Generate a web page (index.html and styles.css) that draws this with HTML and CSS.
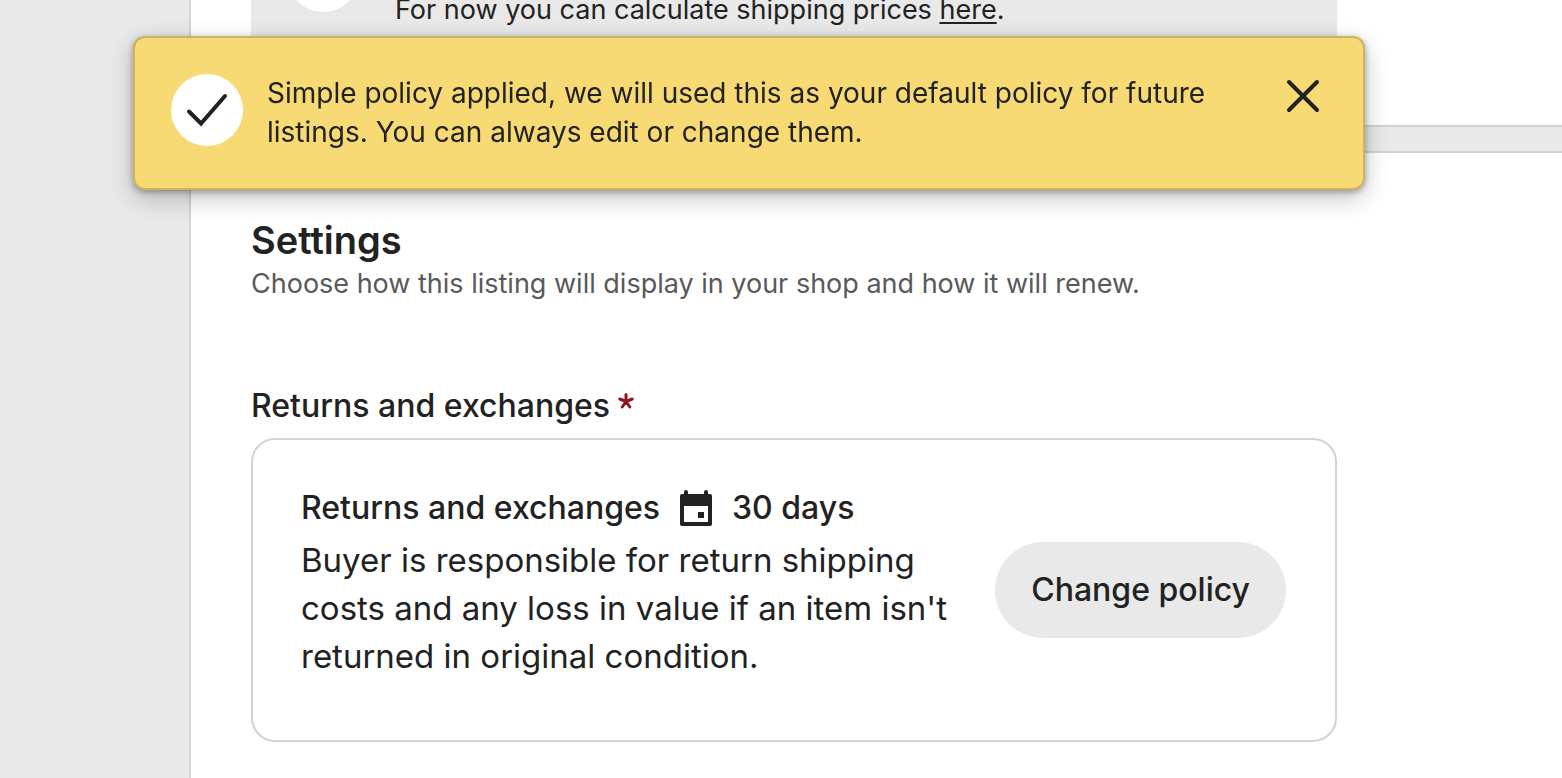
FILE: index.html
```
<!DOCTYPE html>
<html lang="en">
<head>
<meta charset="utf-8">
<meta name="viewport" content="width=device-width, initial-scale=1">
<title>Listing settings</title>
<link rel="stylesheet" href="styles.css">
</head>
<body>
<main class="page">
  <section class="panel panel-shipping">
    <div class="notice">
      <span class="notice-badge"></span>
      <p class="notice-text">For now you can calculate shipping prices <a class="link" href="#">here</a>.</p>
    </div>
  </section>
  <section class="panel panel-settings">
    <h1 class="title">Settings</h1>
    <p class="subtitle">Choose how this listing will display in your shop and how it will renew.</p>
    <h2 class="field-label">Returns and exchanges
      <svg class="required" viewBox="0 0 16 16" role="img" aria-label="required"><path d="M8 8.500V1.500M8 8.500L1.800 6M8 8.500l6.200-2.500M8 8.500l-3.800 5.500M8 8.500l3.800 5.500"/></svg>
    </h2>
    <div class="policy">
      <div class="policy-info">
        <h3 class="policy-title">
          <span>Returns and exchanges</span>
          <svg class="calendar" viewBox="0 0 32 36" aria-hidden="true"><path fill-rule="evenodd" d="M4 4V2a2 2 0 0 1 4 0v2h16V2a2 2 0 0 1 4 0v2h2a2 2 0 0 1 2 2v28a2 2 0 0 1-2 2H2a2 2 0 0 1-2-2V6a2 2 0 0 1 2-2zM4 16v16h24V16zM18 22h6v6h-6z"/></svg>
          <span>30 days</span>
        </h3>
        <p class="policy-text">Buyer is responsible for return shipping costs and any loss in value if an item isn't returned in original condition.</p>
      </div>
      <button class="change" type="button">Change policy</button>
    </div>
  </section>
</main>
<div class="toast" role="status">
  <span class="toast-badge">
    <svg class="check" viewBox="0 0 42 34" aria-hidden="true"><path d="M3 18.500L15 30.500L39 3"/></svg>
  </span>
  <p class="toast-text">Simple policy applied, we will used this as your default policy for future listings. You can always edit or change them.</p>
  <button class="close" type="button" aria-label="Close">
    <svg class="cross" viewBox="0 0 34 34" aria-hidden="true"><path d="M3 3L31 31M31 3L3 31"/></svg>
  </button>
</div>
</body>
</html>
```

FILE: styles.css
```
* {
  box-sizing: border-box;
}

body {
  margin: 0;
  height: 100vh;
  overflow: hidden;
  background: #e9e9e9;
  color: #222;
  font-family: Inter, "Liberation Sans", sans-serif;
}

h1, h2, h3, p {
  margin: 0;
  font-weight: 400;
}

button {
  border: 0;
  padding: 0;
  color: inherit;
  font-family: inherit;
  cursor: pointer;
}

.page {
  display: flex;
  flex-direction: column;
  gap: 24px;
  min-height: calc(100vh + 96px);
  margin-top: -96px;
  padding-left: 189px;
}

.panel {
  padding: 0 225px 60px 60px;
  background: #fff;
  border: 2px solid #d3d3d3;
  border-right: 0;
}

.panel-shipping {
  border-top: 0;
}

.panel-settings {
  flex: 1;
  padding-top: 63px;
  padding-bottom: 36px;
  border-bottom: 0;
}

.notice {
  display: flex;
  align-items: flex-end;
  gap: 36px;
  min-height: 161px;
  padding: 36px;
  background: #e9e9e9;
}

.notice-badge {
  align-self: flex-start;
  flex: none;
  width: 72px;
  height: 72px;
  border-radius: 50%;
  background: #fff;
}

.notice-text {
  font-size: 27px;
  line-height: 38px;
}

.link {
  color: inherit;
  text-decoration: underline;
  text-decoration-thickness: 2px;
  text-underline-offset: 3px;
}

.title {
  font-size: 38px;
  font-weight: 600;
  line-height: 48px;
}

.subtitle {
  color: #595959;
  font-size: 27px;
  line-height: 40px;
}

.field-label {
  display: flex;
  align-items: center;
  gap: 8px;
  margin-top: 78px;
  margin-bottom: 8px;
  font-size: 32px;
  font-weight: 500;
  line-height: 48px;
}

.required {
  width: 16px;
  height: 16px;
  margin-bottom: 10px;
  fill: none;
  stroke: #8d1327;
  stroke-width: 3;
  stroke-linecap: round;
}

.policy {
  display: flex;
  align-items: center;
  justify-content: space-between;
  gap: 40px;
  padding: 44px 49px 44px 48px;
  border: 2px solid #d3d3d3;
  border-radius: 24px;
}

.policy-info {
  flex: 1;
  padding-bottom: 16px;
}

.policy-title {
  display: flex;
  align-items: center;
  gap: 20px;
  margin-bottom: 4px;
  font-size: 32px;
  font-weight: 500;
  line-height: 48px;
}

.calendar {
  width: 32px;
  height: 36px;
  fill: #222;
}

.policy-text {
  font-size: 33px;
  line-height: 48px;
}

.change {
  flex: none;
  padding: 24px 36px;
  border-radius: 48px;
  background: #e9e9e9;
  font-size: 32px;
  font-weight: 500;
  line-height: 48px;
}

.toast {
  position: fixed;
  top: 36px;
  right: 197px;
  left: 133px;
  display: flex;
  align-items: flex-start;
  gap: 24px;
  padding: 36px;
  background: #f7da73;
  border: 2px solid #ccb45f;
  border-radius: 12px;
  box-shadow: 0 2px 6px rgba(0, 0, 0, .3), 0 8px 24px rgba(0, 0, 0, .24);
}

.toast-badge {
  display: flex;
  align-items: center;
  justify-content: center;
  flex: none;
  width: 72px;
  height: 72px;
  border-radius: 50%;
  background: #fff;
}

.check {
  width: 42px;
  height: 34px;
  fill: none;
  stroke: #222;
  stroke-width: 4;
  stroke-linecap: round;
}

.toast-text {
  flex: 1;
  font-size: 28px;
  line-height: 39px;
}

.close {
  display: flex;
  align-items: center;
  justify-content: center;
  flex: none;
  width: 48px;
  height: 44px;
  background: none;
}

.cross {
  width: 34px;
  height: 34px;
  fill: none;
  stroke: #222;
  stroke-width: 4;
  stroke-linecap: round;
}
```
